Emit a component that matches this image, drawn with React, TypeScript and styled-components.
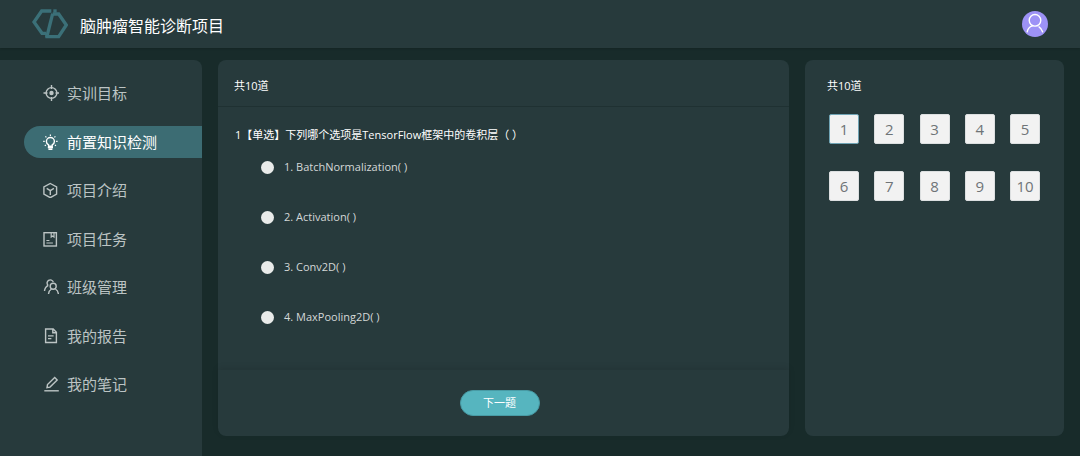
import React, { useState } from "react";
import styled, { createGlobalStyle } from "styled-components";

const color = {
  page: "#182b2a",
  panel: "#273a3c",
  line: "#1f3132",
  active: "#3c6c73",
  accent: "#56b5bf",
  text: "#ffffff",
  muted: "#bcc4c4",
};

const GlobalStyle = createGlobalStyle`
  *, *::before, *::after { box-sizing: border-box; }
  body {
    margin: 0;
    background: ${color.page};
    color: ${color.text};
    font-family: "Open Sans", "Noto Sans CJK SC", sans-serif;
    font-size: 11px;
    line-height: 16px;
  }
`;

const Page = styled.div`
  display: flex;
  flex-direction: column;
  min-height: 100vh;
`;

const Header = styled.header`
  display: flex;
  align-items: center;
  gap: 12px;
  height: 48px;
  padding: 0 32px;
  background: ${color.panel};
  box-shadow: 0 1px 2px rgba(0, 0, 0, 0.15);
`;

const Title = styled.h1`
  flex: 1;
  margin: 0;
  padding-top: 3px;
  font-size: 16px;
  line-height: 24px;
  font-weight: 400;
`;

const AvatarButton = styled.button`
  width: 26px;
  height: 26px;
  padding: 0;
  border: 0;
  border-radius: 50%;
  background: #9d92f6;
  svg { display: block; }
`;

const Body = styled.div`
  flex: 1;
  display: flex;
  gap: 16px;
  padding: 12px 16px 0 0;
`;

const Sidebar = styled.nav`
  flex: 0 0 202px;
  padding: 17px 0 24px 24px;
  background: ${color.panel};
  border-radius: 0 8px 0 0;
`;

const NavList = styled.ul`
  display: flex;
  flex-direction: column;
  justify-content: space-between;
  min-height: 323px;
  margin: 0;
  padding: 0;
  list-style: none;
`;

const NavLink = styled.a<{ $active: boolean }>`
  display: flex;
  align-items: center;
  gap: 8px;
  height: 32px;
  padding-left: 19px;
  border-radius: 16px 0 0 16px;
  background: ${(p) => (p.$active ? color.active : "transparent")};
  color: ${(p) => (p.$active ? color.text : color.muted)};
  font-size: 15px;
  line-height: 24px;
  text-decoration: none;
`;

const Panel = styled.section`
  display: flex;
  flex-direction: column;
  margin-bottom: 20px;
  background: ${color.panel};
  border-radius: 8px;
`;

const QuestionPanel = styled(Panel)`
  flex: 1;
`;

const NumbersPanel = styled(Panel)`
  flex: 0 0 259px;
  gap: 20px;
  padding: 18px 22px;
`;

const PanelTitle = styled.h2`
  margin: 0;
  font-size: 11px;
  line-height: 16px;
  font-weight: 400;
`;

const PanelHead = styled.div`
  padding: 18px 16px 12px;
  border-bottom: 1px solid ${color.line};
`;

const Question = styled.fieldset`
  flex: 1;
  margin: 0;
  padding: 20px 17px;
  border: 0;
`;

const QuestionText = styled.legend`
  float: left;
  width: 100%;
  padding: 0;
  margin-bottom: 16px;
`;

const Options = styled.div`
  clear: both;
  display: flex;
  flex-direction: column;
  gap: 34px;
  padding-left: 26px;
`;

const Option = styled.label`
  display: flex;
  align-items: center;
  gap: 10px;
  color: #d4d8d8;
`;

const Radio = styled.input`
  appearance: none;
  width: 13px;
  height: 13px;
  margin: 0;
  border-radius: 50%;
  background: #e9ebea;
  &:checked { border: 4px solid ${color.accent}; }
`;

const PanelFoot = styled.div`
  display: flex;
  justify-content: center;
  padding: 20px 24px 20px 16px;
  border-radius: 0 0 8px 8px;
  box-shadow: 0 -2px 6px rgba(0, 0, 0, 0.1);
`;

const NextButton = styled.button`
  width: 80px;
  height: 26px;
  padding: 0;
  border: 1px solid #489ba5;
  border-radius: 13px;
  background: ${color.accent};
  color: ${color.text};
  font: inherit;
`;

const NumberGrid = styled.div`
  display: grid;
  grid-template-columns: repeat(5, 30px);
  justify-content: space-between;
  row-gap: 27px;
  padding: 0 2px;
`;

const NumberButton = styled.button<{ $current: boolean }>`
  height: 30px;
  padding: 0;
  border: 1px solid ${(p) => (p.$current ? "#6fa3b4" : "#dcdfe0")};
  border-radius: 2px;
  background: #f2f2f2;
  color: #6f7477;
  font: inherit;
  font-size: 15px;
`;

const Logo = () => (
  <svg width="36" height="30" viewBox="0 0 108 90" fill="none" stroke="#3b7078" strokeWidth="10" aria-hidden="true">
    <path d="M58 6H29L6 39l24 34h12" />
    <path d="M64 6h10" />
    <path d="M62 14 44 85" />
    <path d="M62 15h18l23 33-23 35H40" />
  </svg>
);

const Avatar = () => (
  <svg width="26" height="26" viewBox="0 0 26 26" fill="none" stroke="#fff" strokeWidth="1.4" strokeLinecap="round">
    <circle cx="13" cy="9.3" r="5.8" />
    <path d="M5.2 20.8c.6-3 2.600-5 5-5.900M20.600 20.800c-.6-2-1.700-3.700-3.600-4.900" />
  </svg>
);

const Icon = ({ children }: { children: React.ReactNode }) => (
  <svg width="16" height="16" viewBox="0 0 16 16" fill="none" stroke="currentColor" strokeWidth="1.4" aria-hidden="true">
    {children}
  </svg>
);

const navItems = [
  {
    label: "实训目标",
    icon: (
      <>
        <circle cx="8.500" cy="8" r="5.400" />
        <circle cx="8.500" cy="8" r="2.200" fill="currentColor" stroke="none" />
        <path d="M8.500 0v4M8.500 12v4M.5 8h4M12.500 8h4" />
      </>
    ),
  },
  {
    label: "前置知识检测",
    icon: (
      <>
        <path d="M5.600 12.200v-1.300C4.200 10.100 3.400 8.900 3.400 7.500a4 4 0 0 1 8 0c0 1.400-.8 2.600-2.200 3.400v1.300zM4.800 13.500h5.200M5.400 15.300h4" />
        <path strokeWidth="1.200" d="M7.400.6v1.500M2.400 2.300l1 1M12.400 2.300l-1 1M.2 7.300h1.500M13.100 7.300h1.500M1.800 11.800l1.100-.8M13 11.800l-1.100-.8" />
      </>
    ),
  },
  {
    label: "项目介绍",
    icon: (
      <>
        <path d="M7.300 1.500 13.600 5v7.200l-6.300 3.500L.9 12.200V5z" />
        <path d="M3.700 6.400 7.300 8.600l3.600-2.200M7.300 8.600v4.400" />
      </>
    ),
  },
  {
    label: "项目任务",
    icon: (
      <>
        <rect x="1" y="1.700" width="12.400" height="13.300" />
        <path strokeWidth="1.200" d="M8.200 2v4l1.400-1 1.400 1V2M3.400 9.500h3M3.400 12h6.500" />
      </>
    ),
  },
  {
    label: "班级管理",
    icon: (
      <>
        <circle cx="10.200" cy="7.200" r="3" />
        <path d="M5.500 15c.2-2.200 1.300-4 3-5M15.400 15c-.2-2.200-1.300-4-3-5" />
        <path d="M10.300 3A3.200 3.200 0 1 0 5 6.300M1.500 12c.2-2.400 1.300-4.500 3.800-5.700" />
      </>
    ),
  },
  {
    label: "我的报告",
    icon: (
      <>
        <path d="M2.600 1h7.600l3.200 3.300v10.200H2.600zM9.800 1v3.800h3.600" />
        <path strokeWidth="1.200" d="M5 7.800h5.600M5 10.600h3.400" />
      </>
    ),
  },
  {
    label: "我的笔记",
    icon: (
      <>
        <path d="M1.300 14.800h14.500" />
        <path d="m4 11.600.5-3L11.700 1.400l2.500 2.500L7 11.100z" />
      </>
    ),
  },
];

const options = ["BatchNormalization( )", "Activation( )", "Conv2D( )", "MaxPooling2D( )"];
const numbers = Array.from({ length: 10 }, (_, i) => i + 1);

export default function App() {
  const [answer, setAnswer] = useState<number | null>(null);

  return (
    <>
      <GlobalStyle />
      <Page>
        <Header>
          <Logo />
          <Title>脑肿瘤智能诊断项目</Title>
          <AvatarButton type="button" aria-label="用户">
            <Avatar />
          </AvatarButton>
        </Header>
        <Body>
          <Sidebar>
            <NavList>
              {navItems.map((item, i) => (
                <li key={item.label}>
                  <NavLink href="#" $active={i === 1}>
                    <Icon>{item.icon}</Icon>
                    {item.label}
                  </NavLink>
                </li>
              ))}
            </NavList>
          </Sidebar>
          <QuestionPanel>
            <PanelHead>
              <PanelTitle>共10道</PanelTitle>
            </PanelHead>
            <Question>
              <QuestionText>1【单选】下列哪个选项是TensorFlow框架中的卷积层（ ）</QuestionText>
              <Options>
                {options.map((text, i) => (
                  <Option key={text}>
                    <Radio type="radio" name="answer" checked={answer === i} onChange={() => setAnswer(i)} />
                    {i + 1}. {text}
                  </Option>
                ))}
              </Options>
            </Question>
            <PanelFoot>
              <NextButton type="button">下一题</NextButton>
            </PanelFoot>
          </QuestionPanel>
          <NumbersPanel>
            <PanelTitle>共10道</PanelTitle>
            <NumberGrid>
              {numbers.map((n) => (
                <NumberButton key={n} type="button" $current={n === 1}>
                  {n}
                </NumberButton>
              ))}
            </NumberGrid>
          </NumbersPanel>
        </Body>
      </Page>
    </>
  );
}
